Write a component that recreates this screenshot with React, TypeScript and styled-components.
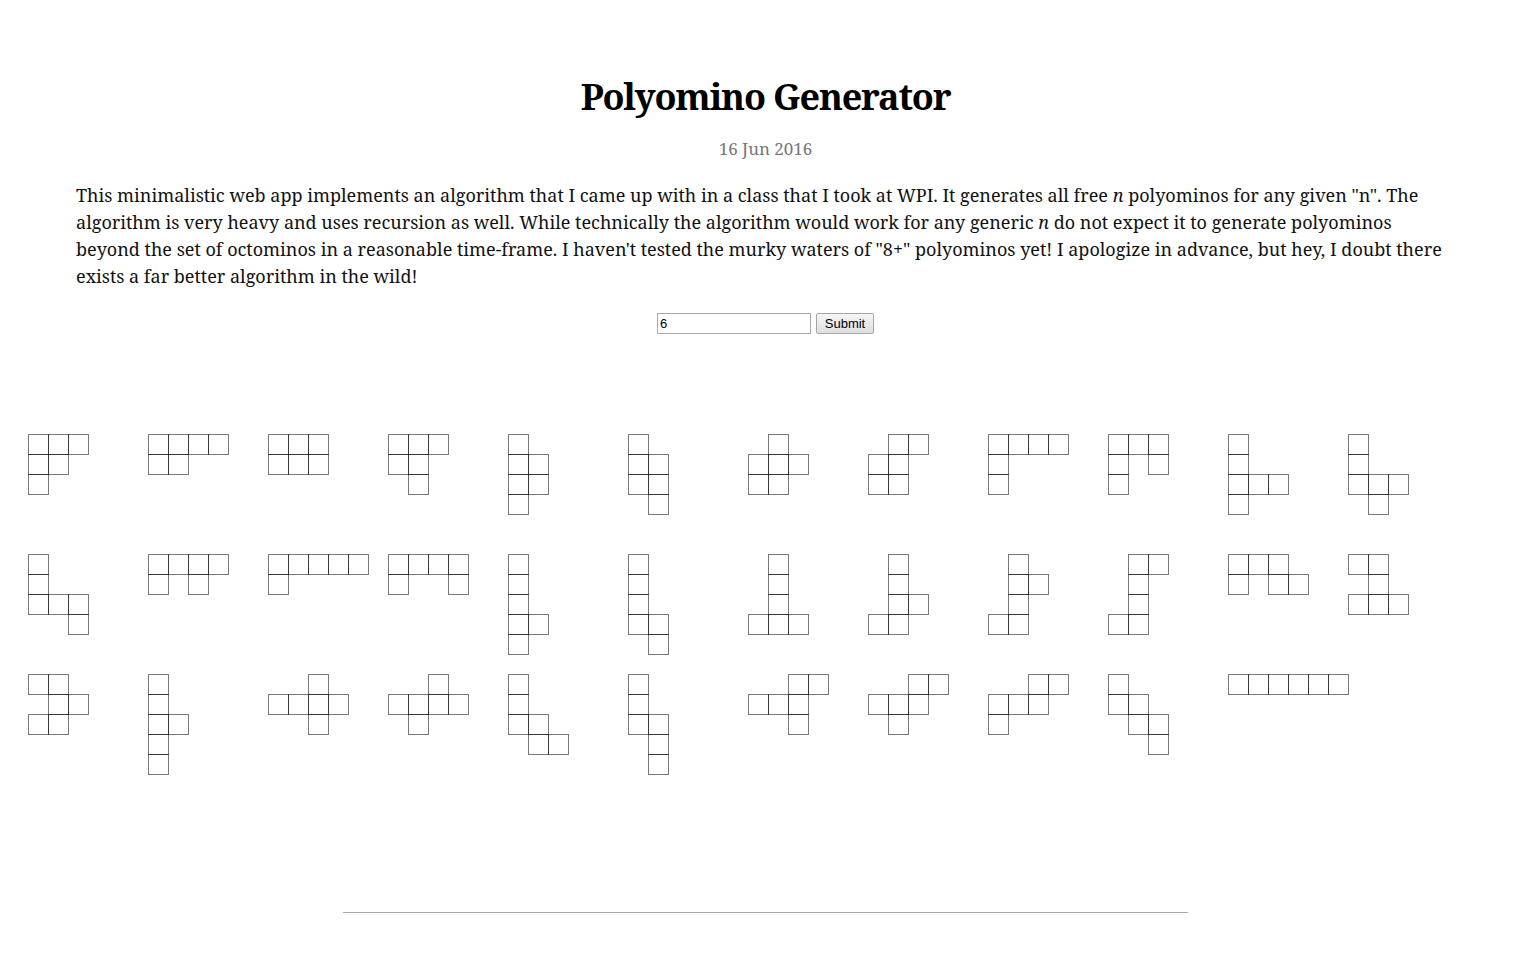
import React from "react";
import styled, { createGlobalStyle } from "styled-components";

const GlobalStyle = createGlobalStyle`
  html, body { margin: 0; padding: 0; background: #fff; }
  body { font-family: "Noto Serif", "DejaVu Serif", serif; color: #111; }
`;

type Cell = [number, number];

const SHAPES: Cell[][] = [
  [[0,0],[1,0],[2,0],[0,1],[1,1],[0,2]],
  [[0,0],[1,0],[2,0],[3,0],[0,1],[1,1]],
  [[0,0],[1,0],[2,0],[0,1],[1,1],[2,1]],
  [[0,0],[1,0],[2,0],[0,1],[1,1],[1,2]],
  [[0,0],[0,1],[1,1],[0,2],[1,2],[0,3]],
  [[0,0],[0,1],[1,1],[0,2],[1,2],[1,3]],
  [[1,0],[0,1],[1,1],[2,1],[0,2],[1,2]],
  [[1,0],[2,0],[0,1],[1,1],[0,2],[1,2]],
  [[0,0],[1,0],[2,0],[3,0],[0,1],[0,2]],
  [[0,0],[1,0],[2,0],[0,1],[2,1],[0,2]],
  [[0,0],[0,1],[0,2],[1,2],[2,2],[0,3]],
  [[0,0],[0,1],[0,2],[1,2],[2,2],[1,3]],

  [[0,0],[0,1],[0,2],[1,2],[2,2],[2,3]],
  [[0,0],[1,0],[2,0],[3,0],[0,1],[2,1]],
  [[0,0],[1,0],[2,0],[3,0],[4,0],[0,1]],
  [[0,0],[1,0],[2,0],[3,0],[0,1],[3,1]],
  [[0,0],[0,1],[0,2],[0,3],[1,3],[0,4]],
  [[0,0],[0,1],[0,2],[0,3],[1,3],[1,4]],
  [[1,0],[1,1],[1,2],[0,3],[1,3],[2,3]],
  [[1,0],[1,1],[1,2],[2,2],[0,3],[1,3]],
  [[1,0],[1,1],[2,1],[1,2],[0,3],[1,3]],
  [[1,0],[2,0],[1,1],[1,2],[0,3],[1,3]],
  [[0,0],[1,0],[2,0],[0,1],[2,1],[3,1]],
  [[0,0],[1,0],[1,1],[0,2],[1,2],[2,2]],

  [[0,0],[1,0],[1,1],[2,1],[0,2],[1,2]],
  [[0,0],[0,1],[0,2],[1,2],[0,3],[0,4]],
  [[2,0],[0,1],[1,1],[2,1],[3,1],[2,2]],
  [[2,0],[0,1],[1,1],[2,1],[3,1],[1,2]],
  [[0,0],[0,1],[0,2],[1,2],[1,3],[2,3]],
  [[0,0],[0,1],[0,2],[1,2],[1,3],[1,4]],
  [[2,0],[3,0],[0,1],[1,1],[2,1],[2,2]],
  [[2,0],[3,0],[0,1],[1,1],[2,1],[1,2]],
  [[2,0],[3,0],[0,1],[1,1],[2,1],[0,2]],
  [[0,0],[0,1],[1,1],[1,2],[2,2],[2,3]],
  [[0,0],[1,0],[2,0],[3,0],[4,0],[5,0]],
];

const Page = styled.div`
  padding: 0 62px 0 76px;
`;

const Header = styled.header`
  text-align: center;
  padding-top: 72px;
`;

const Title = styled.h1`
  margin: 0;
  font-size: 36px;
  line-height: 50px;
  font-weight: 700;
  letter-spacing: -1.2px;
  color: #000;
`;

const DateLine = styled.div`
  margin-top: 15px;
  font-size: 17px;
  line-height: 24px;
  color: #777;
`;

const Intro = styled.p`
  margin: 21px 0 0;
  font-size: 18px;
  line-height: 27px;
  color: #111;
  em { font-style: italic; }
`;

const Form = styled.form`
  display: flex;
  justify-content: center;
  align-items: center;
  gap: 5px;
  margin-top: 23px;
`;

const NumberInput = styled.input`
  box-sizing: border-box;
  width: 154px;
  height: 21px;
  border: 1px solid #a9a9a9;
  padding: 1px 2px;
  font-family: "Liberation Sans", Arial, sans-serif;
  font-size: 13px;
  color: #000;
  outline: none;
`;

const SubmitButton = styled.button`
  box-sizing: border-box;
  width: 58px;
  height: 21px;
  border: 1px solid #a6a6a6;
  border-radius: 2px;
  background: linear-gradient(#f6f6f6, #dedede);
  font-family: "Liberation Sans", Arial, sans-serif;
  font-size: 13px;
  color: #000;
  padding: 0;
`;

const Grid = styled.div`
  display: flex;
  flex-wrap: wrap;
  padding: 0 0 0 28px;
  margin-top: 100px;
`;

const Slot = styled.div`
  width: 120px;
  height: 120px;
`;

const ShapeSvg = styled.svg`
  display: block;
  overflow: visible;
`;

const Footer = styled.div`
  display: flex;
  justify-content: center;
  padding: 118px 0 47px;
`;

const Rule = styled.hr`
  width: 845px;
  margin: 0 0 0 14px;
  border: 0;
  border-top: 1px solid #aaa;
`;

function Polyomino({ cells }: { cells: Cell[] }) {
  return (
    <Slot>
      <ShapeSvg width={121} height={121} viewBox="0 0 121 121">
        {cells.map(([x, y], i) => (
          <rect
            key={i}
            x={x * 20 + 0.5}
            y={y * 20 + 0.5}
            width={20}
            height={20}
            fill="none"
            stroke="rgba(0,0,0,0.53)"
            strokeWidth={1}
          />
        ))}
      </ShapeSvg>
    </Slot>
  );
}

export default function App() {
  return (
    <>
      <GlobalStyle />
      <Page>
        <Header>
          <Title>Polyomino Generator</Title>
          <DateLine>16 Jun 2016</DateLine>
        </Header>
        <Intro>
          This minimalistic web app implements an algorithm that I came up with in a class that I took at WPI. It generates all free <em>n</em> polyominos for any given "n". The algorithm is very heavy and uses recursion as well. While technically the algorithm would work for any generic <em>n</em> do not expect it to generate polyominos beyond the set of octominos in a reasonable time-frame. I haven't tested the murky waters of "8+" polyominos yet! I apologize in advance, but hey, I doubt there exists a far better algorithm in the wild!
        </Intro>
        <Form onSubmit={(e) => e.preventDefault()}>
          <NumberInput type="text" defaultValue="6" />
          <SubmitButton type="submit">Submit</SubmitButton>
        </Form>
      </Page>
      <Grid>
        {SHAPES.map((s, i) => (
          <Polyomino key={i} cells={s} />
        ))}
      </Grid>
      <Footer>
        <Rule />
      </Footer>
    </>
  );
}
